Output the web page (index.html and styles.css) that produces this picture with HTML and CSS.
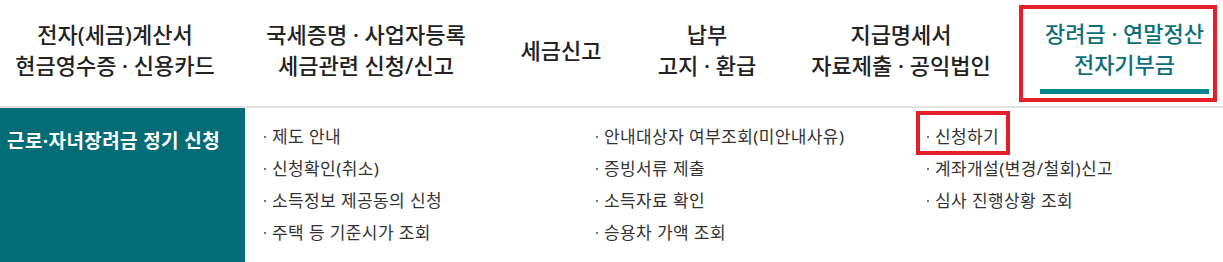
FILE: index.html
```html
<!DOCTYPE html>
<html>
  <head>
    <title>장려금 · 연말정산</title>
    <link rel="stylesheet" href="styles.css">
  </head>
  <body>
    <div class="gnb">
      <div class="gnb-item item-1">전자(세금)계산서<br>현금영수증 · 신용카드</div>
      <div class="gnb-item item-2">국세증명 · 사업자등록<br>세금관련 신청/신고</div>
      <div class="gnb-item item-3">세금신고</div>
      <div class="gnb-item item-4">납부<br>고지 · 환급</div>
      <div class="gnb-item item-5">지급명세서<br>자료제출 · 공익법인</div>
      <div class="gnb-item item-6 active">
        <div class="label">장려금 · 연말정산<br>전자기부금</div>
        <div class="underline"></div>
      </div>
    </div>

    <div class="submenu">
      <div class="submenu-title">근로·자녀장려금 정기 신청</div>
      <div class="submenu-lists">
        <ul class="list">
          <li>제도 안내</li>
          <li>신청확인(취소)</li>
          <li>소득정보 제공동의 신청</li>
          <li>주택 등 기준시가 조회</li>
        </ul>
        <ul class="list">
          <li>안내대상자 여부조회(미안내사유)</li>
          <li>증빙서류 제출</li>
          <li>소득자료 확인</li>
          <li>승용차 가액 조회</li>
        </ul>
        <ul class="list">
          <li class="marked">신청하기</li>
          <li>계좌개설(변경/철회)신고</li>
          <li>심사 진행상황 조회</li>
        </ul>
      </div>
    </div>
  </body>
</html>
```

FILE: styles.css
```css
body {
  margin: 0;
  width: 1223px;
  height: 262px;
  overflow: hidden;
  background: #fff;
  font-family: "Noto Sans", "Noto Sans CJK KR", sans-serif;
  color: #333;
}
.gnb {
  display: flex;
  align-items: center;
  height: 108px;
  padding-bottom: 6px;
  box-sizing: border-box;
  border-bottom: 2px solid #e2e2e2;
}
.gnb-item {
  font-size: 22px;
  font-weight: 500;
  line-height: 31px;
  color: #222;
  text-align: center;
  white-space: nowrap;
}
.item-1 { width: 230px; }
.item-2 { width: 272px; }
.item-3 { width: 118px; }
.item-4 { width: 174px; }
.item-5 { width: 214px; margin-right: 11px; }
.item-6 {
  align-self: flex-start;
  margin-top: 5px;
  width: 198px;
  height: 97px;
  box-sizing: border-box;
  border: 4px solid #e51f2a;
  padding: 9px 0 0 17px;
  color: #0f6f79;
}
.item-6 .label {
  width: 169px;
  height: 62px;
  text-align: center;
}
.item-6 .underline {
  margin-top: 9px;
  width: 169px;
  height: 5px;
  background: #00858d;
}
.submenu {
  display: flex;
  height: 154px;
}
.submenu-title {
  width: 245px;
  box-sizing: border-box;
  padding: 21px 0 0 7px;
  background: #046c76;
  color: #fff;
  font-size: 19px;
  font-weight: bold;
  line-height: 24px;
  letter-spacing: 0.4px;
  white-space: nowrap;
}
.submenu-lists {
  display: grid;
  grid-template-columns: 332px 331px 290px;
  padding: 13px 0 0 19px;
}
.list {
  margin: 0;
  padding: 0;
  list-style: none;
}
.list li {
  display: flex;
  align-items: center;
  width: fit-content;
  position: relative;
  font-size: 17px;
  line-height: 32px;
  letter-spacing: 0.4px;
  color: #333;
  white-space: nowrap;
}
.list li::before {
  content: "";
  width: 2px;
  height: 2px;
  margin: 0 6px 0 0;
  background: #777;
}
.list li.marked::after {
  content: "";
  position: absolute;
  left: -11px;
  right: -11px;
  top: -10px;
  bottom: -2px;
  border: 4px solid #e51f2a;
}
```
